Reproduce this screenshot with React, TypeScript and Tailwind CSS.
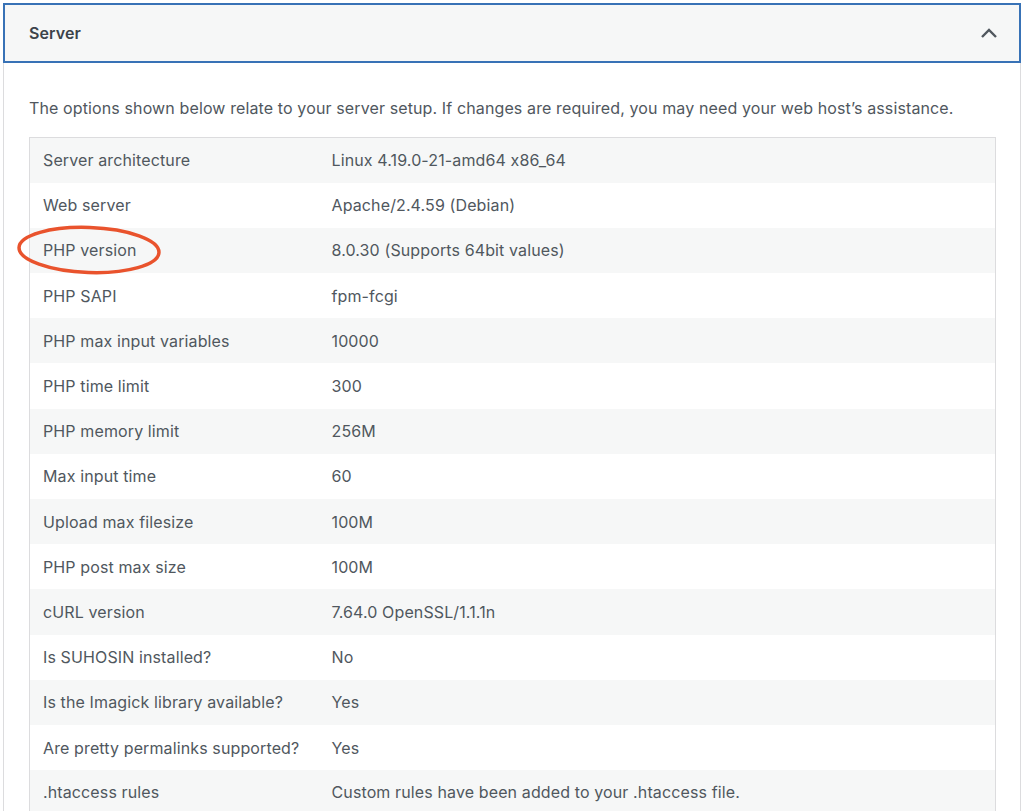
import React from "react";

const rows: [string, string][] = [
  ["Server architecture", "Linux 4.19.0-21-amd64 x86_64"],
  ["Web server", "Apache/2.4.59 (Debian)"],
  ["PHP version", "8.0.30 (Supports 64bit values)"],
  ["PHP SAPI", "fpm-fcgi"],
  ["PHP max input variables", "10000"],
  ["PHP time limit", "300"],
  ["PHP memory limit", "256M"],
  ["Max input time", "60"],
  ["Upload max filesize", "100M"],
  ["PHP post max size", "100M"],
  ["cURL version", "7.64.0 OpenSSL/1.1.1n"],
  ["Is SUHOSIN installed?", "No"],
  ["Is the Imagick library available?", "Yes"],
  ["Are pretty permalinks supported?", "Yes"],
  [".htaccess rules", "Custom rules have been added to your .htaccess file."],
];

export default function App() {
  return (
    <div
      className="w-[1024px] h-[811px] overflow-hidden bg-white text-[#50575e] relative"
      style={{ fontFamily: "Inter, 'Noto Sans', sans-serif", fontFeatureSettings: "'calt' 0" }}
    >
      <div className="px-[3px] pt-[3px] h-full flex flex-col">
        <div className="h-[60px] shrink-0 border-2 border-[#3872b6] bg-[#f6f7f7] flex items-center justify-between pl-[24px] pr-[21px]">
          <span className="text-[16px] font-semibold text-[#3c434a] tracking-[0.1px]">Server</span>
          <svg width="18" height="12" viewBox="0 0 18 12" fill="none">
            <path d="M2 10 L9 3 L16 10" stroke="#50575e" strokeWidth="2.4" />
          </svg>
        </div>
        <div className="flex-1 border-x border-[#dcdcde] pl-[25px] pr-[24px] pt-[33px]">
          <p className="text-[16px] leading-[24px] tracking-[0.12px] mb-[17px] whitespace-nowrap">
            The options shown below relate to your server setup. If changes are required, you may need your web host’s assistance.
          </p>
          <table className="w-full border border-[#dcdcde] border-collapse text-[16px] tracking-[0.12px]">
            <tbody>
              {rows.map(([k, v], i) => (
                <tr key={k} className={i % 2 === 0 ? "bg-[#f6f7f7]" : "bg-white"}>
                  <td className="h-[45.2px] w-[302px] pl-[13px] align-middle">{k}</td>
                  <td className="h-[45.2px] pl-0 align-middle">{v}</td>
                </tr>
              ))}
            </tbody>
          </table>
        </div>
      </div>
      <svg
        className="absolute left-0 top-0 pointer-events-none"
        width="200"
        height="300"
        viewBox="0 0 200 300"
      >
        <ellipse
          cx="89"
          cy="250"
          rx="70"
          ry="22.5"
          fill="none"
          stroke="#e9532d"
          strokeWidth="3.5"
          transform="rotate(2 89 250)"
        />
      </svg>
    </div>
  );
}
